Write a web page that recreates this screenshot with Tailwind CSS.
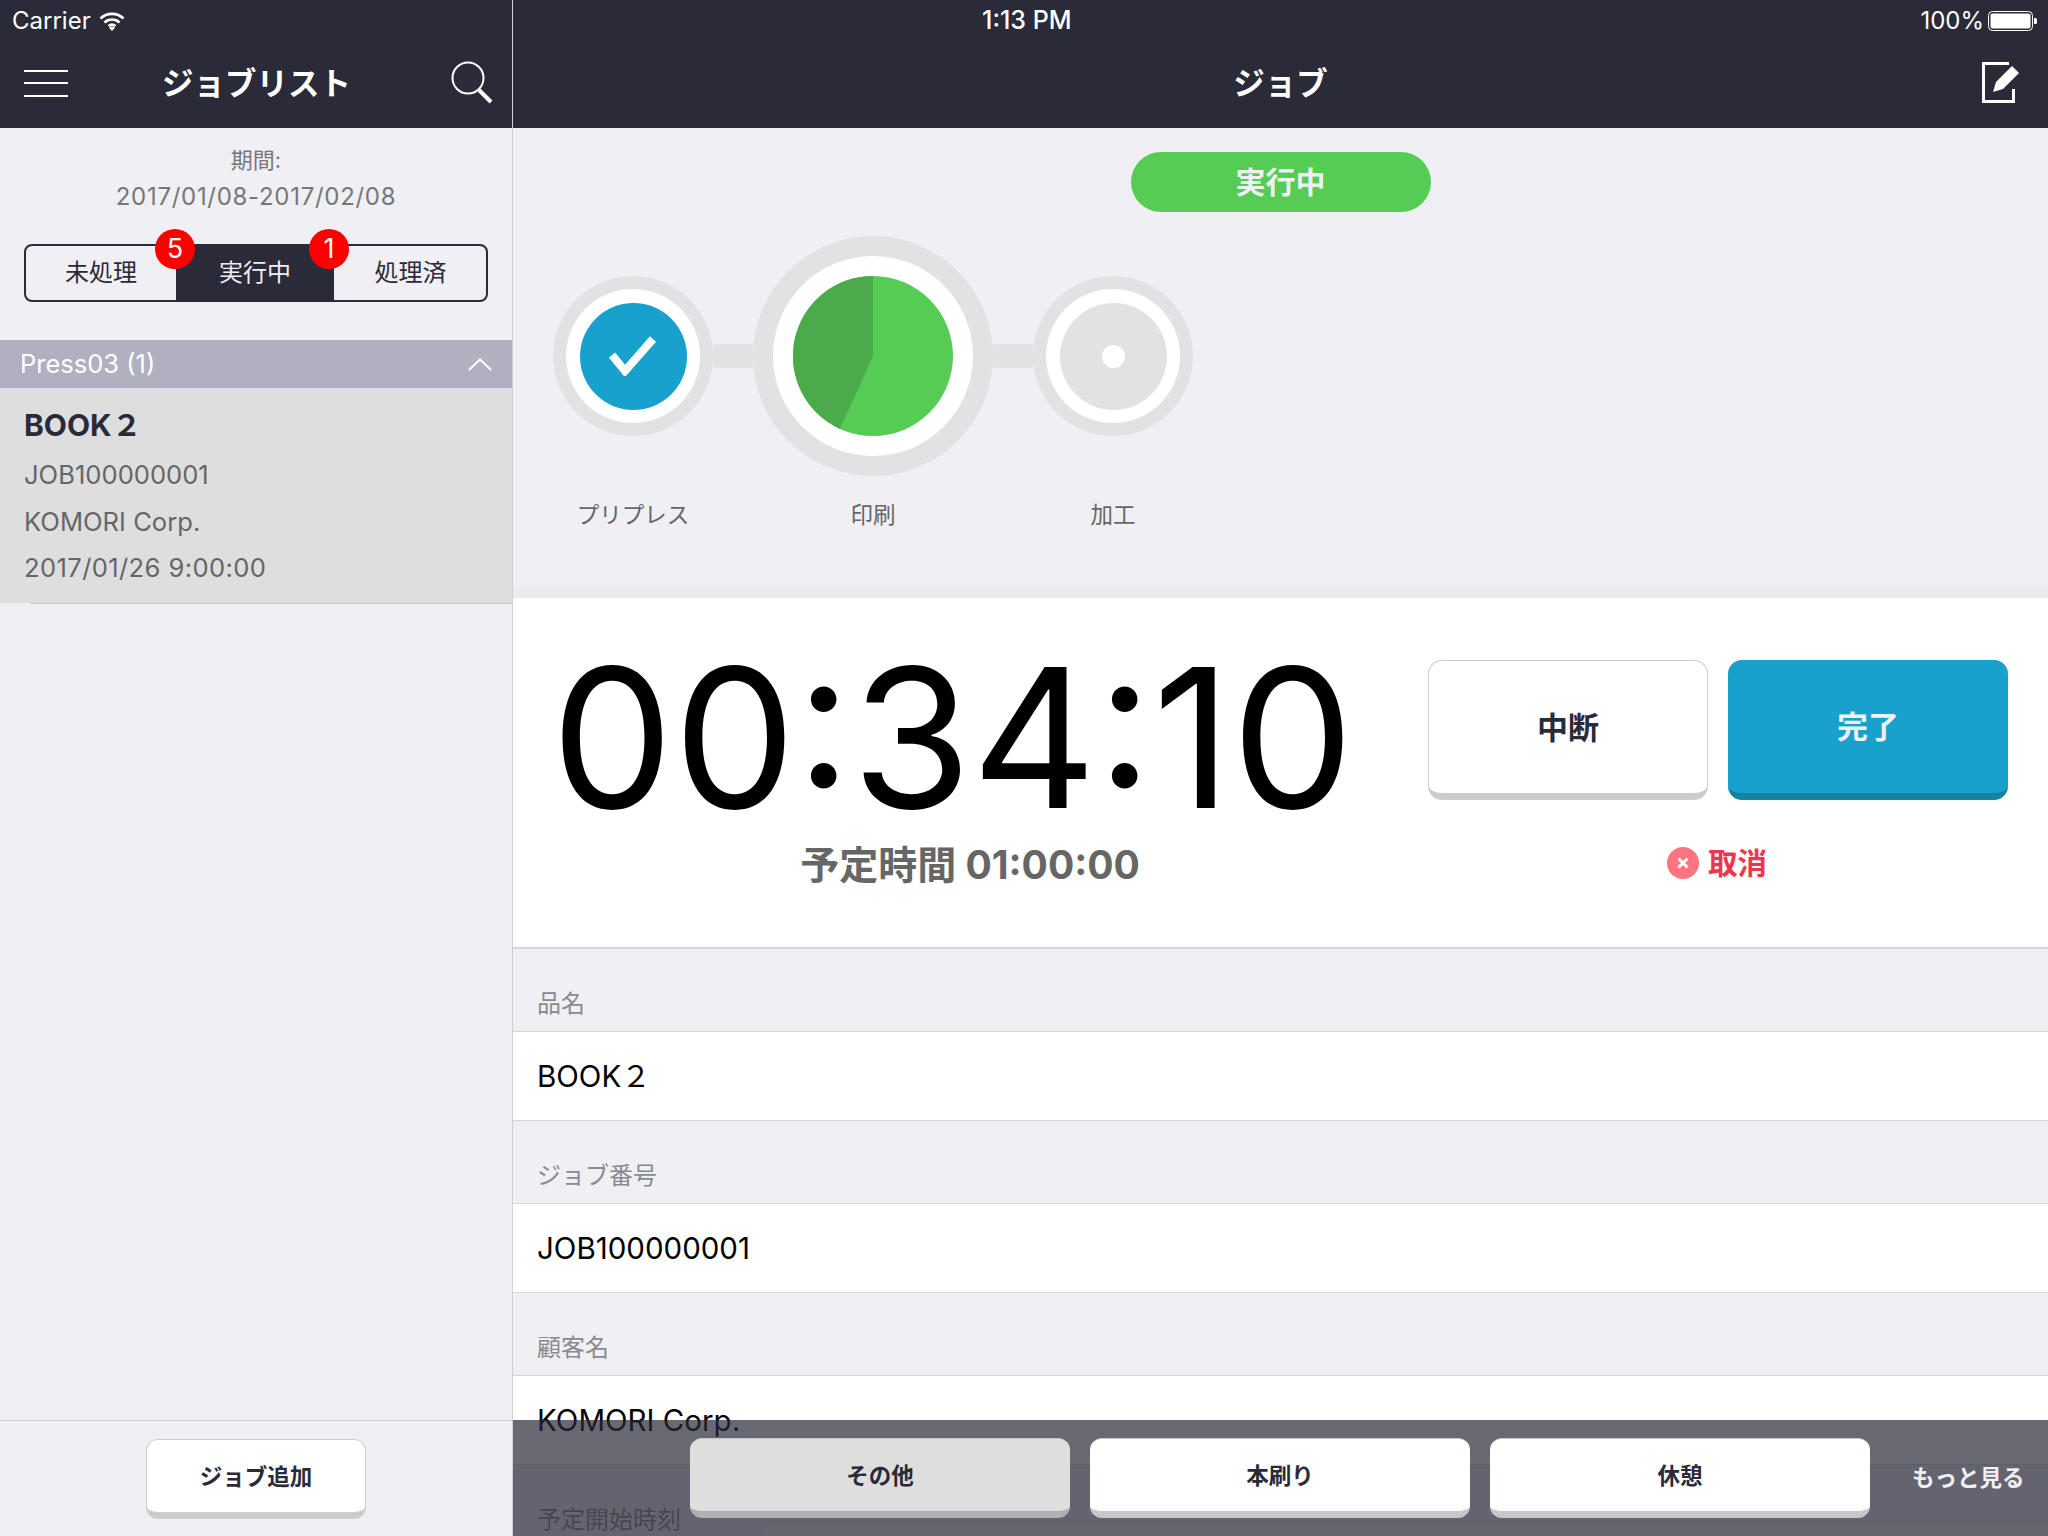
<!doctype html>
<html lang="ja">
<head>
<meta charset="utf-8">
<script src="https://cdn.jsdelivr.net/npm/@tailwindcss/browser@4"></script>
</head>
<body>
<div class="relative flex h-[1536px] w-[2048px] overflow-hidden bg-[#efeff4] font-[Inter,'Noto_Sans_CJK_JP',sans-serif] text-[#2a2a38]">

  <!-- Left pane -->
  <aside class="flex h-full w-[513px] shrink-0 flex-col border-r border-[#cfcfd4]">
    <header class="h-[128px] shrink-0 bg-[#2a2a38] text-white">
      <div class="flex h-[40px] items-center gap-[8px] pl-[12px] pt-[1px] text-[24px]">
        <span>Carrier</span>
        <svg width="26" height="20" viewBox="0 0 26 20" fill="none" stroke="white" stroke-width="2.6"><path d="M1.5 7.5a16.5 16.5 0 0 1 23 0"/><path d="M5.5 11.5a11 11 0 0 1 15 0"/><path d="M9.5 15a5.5 5.5 0 0 1 7 0"/><path d="M13 20l-3-3.2a4.5 4.5 0 0 1 6 0z" fill="white" stroke="none"/></svg>
      </div>
      <div class="flex h-[88px] items-center justify-between pl-[24px] pr-[19px] pb-[2px]">
        <div class="flex w-[44px] flex-col gap-[10.5px]">
          <div class="h-[2px] bg-white"></div>
          <div class="h-[2px] bg-white"></div>
          <div class="h-[2px] bg-white"></div>
        </div>
        <div class="mr-[6px] pt-[2px] text-[31.5px] leading-none font-bold">ジョブリスト</div>
        <svg width="42" height="44" viewBox="0 0 42 44" fill="none" stroke="white"><circle cx="17" cy="17" r="15.5" stroke-width="2"/><path d="M28 29l12 12" stroke-width="4"/></svg>
      </div>
    </header>

    <div class="flex flex-1 flex-col">
      <div class="pt-[14px] text-center text-[#777777]">
        <div class="h-[36px] text-[22px] leading-[36px]">期間:</div>
        <div class="h-[36px] text-[24px] leading-[38px] tracking-[0.7px]">2017/01/08-2017/02/08</div>
      </div>

      <div class="relative mx-[24px] mt-[30px] flex h-[58px] w-[464px] rounded-[8px] border-2 border-[#2a2a38] text-[24px]">
        <div class="flex w-[150px] items-center justify-center">未処理</div>
        <div class="flex w-[158px] items-center justify-center bg-[#2a2a38] text-[#efeff4]">実行中</div>
        <div class="flex flex-1 items-center justify-center pl-[1px]">処理済</div>
        <div class="absolute left-[129px] top-[-17px] flex h-[40px] w-[40px] items-center justify-center rounded-full bg-[#fe0000] text-[27px] text-white">5</div>
        <div class="absolute left-[283px] top-[-17px] flex h-[40px] w-[40px] items-center justify-center rounded-full bg-[#fe0000] text-[27px] text-white">1</div>
      </div>

      <div class="mt-[38px] flex h-[48px] items-center justify-between bg-[#b0b0c0] pl-[20px] pr-[20px] pt-[1px] text-[25.5px] text-white">
        <span>Press03 (1)</span>
        <svg width="24" height="13" viewBox="0 0 24 13" fill="none" stroke="white" stroke-width="2"><path d="M1 12L12 1.5 23 12"/></svg>
      </div>

      <div class="relative h-[216px] border-b border-[#c8c8cc] bg-[#dededf] px-[24px] text-[25.6px] text-[#666666]">
        <div class="pt-[17px] text-[30px] leading-[40px] font-bold text-[#2a2a38]">BOOK２</div>
        <div class="mt-[6px] leading-[47px]">JOB100000001</div>
        <div class="leading-[47px]">KOMORI Corp.</div>
        <div class="leading-[46px] tracking-[0.37px]">2017/01/26 9:00:00</div>
        <div class="absolute bottom-[-1px] left-0 h-px w-[30px] bg-[#efeff4]"></div>
      </div>

      <div class="flex-1"></div>

      <div class="flex h-[116px] shrink-0 justify-center border-t border-[#cfcfd4] pt-[18px]">
        <button class="h-[80px] w-[220px] rounded-[12px] border border-b-[7px] border-[#cccccc] bg-white pt-[2px] text-[22.5px] font-bold text-[#2a2a38]">ジョブ追加</button>
      </div>
    </div>
  </aside>

  <!-- Right pane -->
  <main class="flex h-full min-w-0 flex-1 flex-col">
    <header class="h-[128px] shrink-0 bg-[#2a2a38] text-white">
      <div class="flex h-[40px] items-center pl-[469px] pr-[11px] pt-[1px] text-[24px]">
        <span class="text-[25px] font-medium">1:13 PM</span>
        <span class="ml-auto">100%</span>
        <svg class="ml-[4px]" width="49" height="20" viewBox="0 0 49 20"><rect x="0.5" y="0.5" width="44" height="19" rx="4" fill="none" stroke="white"/><rect x="2.5" y="2.5" width="40" height="15" rx="2" fill="white"/><path d="M46 7h1.5a1.5 1.5 0 0 1 1.5 1.5v3a1.5 1.5 0 0 1-1.5 1.5H46z" fill="white"/></svg>
      </div>
      <div class="relative flex h-[88px] items-center justify-center pb-[2px]">
        <div class="pt-[2px] text-[31.5px] leading-none font-bold">ジョブ</div>
        <svg class="absolute left-[1469px] top-[22px]" width="40" height="42" viewBox="0 0 40 42" fill="none"><path d="M27 1.5H1.5v38h30V27" stroke="white" stroke-width="3"/><path d="M11 30l3-10L30 4l7 7-16 16z" fill="white"/></svg>
      </div>
    </header>

    <section class="h-[470px] shrink-0">
      <div class="flex justify-center pt-[24px]">
        <div class="flex h-[60px] w-[300px] items-center justify-center rounded-full bg-[#55cd55] text-[30px] font-bold text-[#efeff4]">実行中</div>
      </div>
      <div class="mt-[24px] flex h-[240px] items-center pl-[40px]">
        <div class="flex h-[160px] w-[160px] items-center justify-center rounded-full bg-[#e2e2e4]">
          <div class="flex h-[134px] w-[134px] items-center justify-center rounded-full bg-white">
            <div class="flex h-[107px] w-[107px] items-center justify-center rounded-full bg-[#18a1cc]">
              <svg width="48" height="40" viewBox="0 0 48 40" fill="none" stroke="white" stroke-width="8"><path d="M3 19l13 16L44 3"/></svg>
            </div>
          </div>
        </div>
        <div class="h-[24px] w-[40px] bg-[#e2e2e4]"></div>
        <div class="flex h-[240px] w-[240px] items-center justify-center rounded-full bg-[#e2e2e4]">
          <div class="flex h-[200px] w-[200px] items-center justify-center rounded-full bg-white">
            <svg width="160" height="160" viewBox="-80 -80 160 160"><circle r="80" fill="#55cd55"/><path d="M0 0V-80A80 80 0 0 0 -33 72.9Z" fill="#49ab49"/></svg>
          </div>
        </div>
        <div class="h-[24px] w-[40px] bg-[#e2e2e4]"></div>
        <div class="flex h-[160px] w-[160px] items-center justify-center rounded-full bg-[#e2e2e4]">
          <div class="flex h-[134px] w-[134px] items-center justify-center rounded-full bg-white">
            <div class="flex h-[107px] w-[107px] items-center justify-center rounded-full bg-[#e2e2e4]">
              <div class="h-[23px] w-[23px] rounded-full bg-white"></div>
            </div>
          </div>
        </div>
      </div>
      <div class="mt-[21px] flex pl-[40px] text-center text-[22.5px] leading-[36px] text-[#666666]">
        <div class="w-[160px]">プリプレス</div>
        <div class="w-[40px]"></div>
        <div class="w-[240px]">印刷</div>
        <div class="w-[40px]"></div>
        <div class="w-[160px]">加工</div>
      </div>
    </section>

    <section class="relative flex h-[351px] shrink-0 border-b-2 border-[#d6d6da] bg-white">
      <div class="pointer-events-none absolute left-0 right-0 top-[-18px] h-[18px] bg-linear-to-b from-[#efeff4] to-[#e9e9ee]"></div>
      <div class="w-[873px] shrink-0 pl-[41px]">
        <div class="-ml-[3px] mt-[37px] h-[206px] whitespace-nowrap text-[194px] leading-[206px] text-black">00:34:10</div>
        <div class="mt-[-1px] text-center text-[39px] leading-[50px] font-bold text-[#666666]">予定時間 01:00:00</div>
      </div>
      <div class="ml-[42px] flex flex-col pt-[62px]">
        <div class="flex gap-[20px]">
          <button class="h-[140px] w-[280px] rounded-[14px] border border-b-[7px] border-[#cccccc] bg-white pt-[2px] text-[31px] font-bold text-[#2a2a38]">中断</button>
          <button class="h-[140px] w-[280px] rounded-[14px] border-b-[7px] border-[#14819f] bg-[#18a1cc] pt-[2px] text-[31px] font-bold text-[#efeff4]">完了</button>
        </div>
        <div class="mt-[47px] flex items-center justify-center gap-[9px] pr-[2px] text-[29.5px] leading-[32px] font-bold text-[#ef3450]">
          <svg width="32" height="32" viewBox="0 0 32 32"><circle cx="16" cy="16" r="16" fill="#ff7480"/><path d="M11.5 11.5l9 9m0-9l-9 9" stroke="white" stroke-width="3"/></svg>
          <span>取消</span>
        </div>
      </div>
    </section>

    <section class="relative flex-1 overflow-hidden">
      <div class="flex h-[83px] items-end border-b border-[#d6d6da] pb-[9px] pl-[24px] text-[24px] leading-[36px] text-[#8a8a8e]">品名</div>
      <div class="flex h-[89px] items-center border-b border-[#d6d6da] bg-white pl-[24px] text-[29.5px] text-black">BOOK２</div>
      <div class="flex h-[83px] items-end border-b border-[#d6d6da] pb-[9px] pl-[24px] text-[24px] leading-[36px] text-[#8a8a8e]">ジョブ番号</div>
      <div class="flex h-[89px] items-center border-b border-[#d6d6da] bg-white pl-[24px] text-[29.5px] text-black">JOB100000001</div>
      <div class="flex h-[83px] items-end border-b border-[#d6d6da] pb-[9px] pl-[24px] text-[24px] leading-[36px] text-[#8a8a8e]">顧客名</div>
      <div class="flex h-[89px] items-center border-b border-[#d6d6da] bg-white pl-[24px] text-[29.5px] text-black">KOMORI Corp.</div>
      <div class="flex h-[83px] items-end border-b border-[#d6d6da] pb-[9px] pl-[24px] text-[24px] leading-[36px] text-[#8a8a8e]">予定開始時刻</div>
    </section>
  </main>

  <!-- Floating action bar over the detail list -->
  <div class="absolute bottom-0 left-[513px] right-0 flex h-[116px] items-start gap-[20px] bg-[#2a2a38]/70 pl-[177px] pt-[18px]">
    <button class="h-[80px] w-[380px] rounded-[12px] border-t border-b-[7px] border-t-[#c8c8cc] border-b-[#b0b0b2] bg-[#dededf] pt-[2px] text-[22.5px] font-bold text-[#2a2a38]">その他</button>
    <button class="h-[80px] w-[380px] rounded-[12px] border-t border-b-[7px] border-t-[#c8c8cc] border-b-[#c8c8ca] bg-white pt-[2px] text-[22.5px] font-bold text-[#2a2a38]">本刷り</button>
    <button class="h-[80px] w-[380px] rounded-[12px] border-t border-b-[7px] border-t-[#c8c8cc] border-b-[#c8c8ca] bg-white pt-[2px] text-[22.5px] font-bold text-[#2a2a38]">休憩</button>
    <div class="ml-[22px] flex h-[80px] items-center text-[22.5px] font-bold text-[#efeff4]">もっと見る</div>
  </div>
</div>
</body>
</html>
